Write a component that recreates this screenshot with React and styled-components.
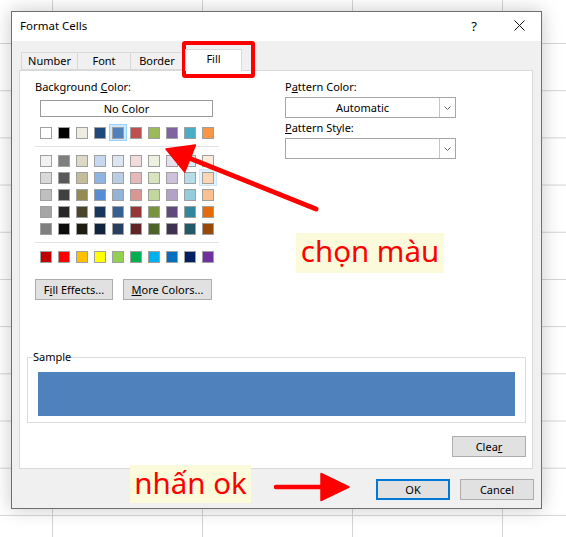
import React from "react";
import styled, { createGlobalStyle } from "styled-components";

const GlobalStyle = createGlobalStyle`
  html, body {
    margin: 0;
    padding: 0;
    height: 100%;
  }
  body {
    min-height: 537px;
    background-color: #ffffff;
    background-image:
      linear-gradient(to right, #d4d4d4 1px, transparent 1px),
      linear-gradient(to bottom, #d4d4d4 1px, transparent 1px);
    background-size: 150px 100%, 100% 47.2px;
    background-position: 52px 0, 0 43px;
    font-family: "Noto Sans", "Open Sans", sans-serif;
    font-size: 11px;
    color: #000;
  }
`;

const THEME_ROW = ["#FFFFFF", "#000000", "#EEECE1", "#1F497D", "#4F81BD", "#C0504D", "#9BBB59", "#8064A2", "#4BACC6", "#F79646"];
const TINT_ROWS = [
  ["#F2F2F2", "#7F7F7F", "#DDD9C4", "#C6D9F1", "#DCE6F2", "#F2DCDB", "#EBF1DE", "#E6E0EC", "#DBEEF4", "#FDEADA"],
  ["#D9D9D9", "#595959", "#C4BD97", "#8EB4E3", "#B9CDE5", "#E6B9B8", "#D7E4BD", "#CCC1DA", "#B7DEE8", "#FCD5B5"],
  ["#BFBFBF", "#404040", "#948A54", "#558ED5", "#95B3D7", "#D99694", "#C3D69B", "#B3A2C7", "#93CDDD", "#FAC090"],
  ["#A6A6A6", "#262626", "#4A452A", "#17375E", "#376092", "#953735", "#77933C", "#604A7B", "#31859C", "#E46C0A"],
  ["#7F7F7F", "#0D0D0D", "#1E1C11", "#10243F", "#254061", "#632523", "#4F6228", "#3F3151", "#215968", "#984807"],
];
const STANDARD_ROW = ["#C00000", "#FF0000", "#FFC000", "#FFFF00", "#92D050", "#00B050", "#00B0F0", "#0070C0", "#002060", "#7030A0"];

const TABS = [
  { label: "Number", width: 57 },
  { label: "Font", width: 54 },
  { label: "Border", width: 54 },
  { label: "Fill", width: 57, active: true },
];

const Screen = styled.div`
  position: relative;
  width: 566px;
  height: 537px;
  box-sizing: border-box;
  padding: 11px 0 0 11px;
  overflow: hidden;
`;

const Dialog = styled.div`
  width: 531px;
  height: 498px;
  box-sizing: border-box;
  border: 1px solid #6f6f6f;
  background: #f0f0f0;
  box-shadow: 0 0 18px rgba(0, 0, 0, 0.22);
  display: flex;
  flex-direction: column;
`;

const TitleBar = styled.div`
  height: 29px;
  flex: none;
  background: #fff;
  display: flex;
  align-items: center;
  padding: 0 16px 2px 8px;
  box-sizing: border-box;
`;

const Title = styled.span`
  font-size: 11.5px;
  line-height: 16px;
`;

const HelpMark = styled.span`
  margin-left: auto;
  width: 14px;
  text-align: center;
  font-size: 13px;
  line-height: 16px;
  margin-right: 33px;
`;

const CloseIcon = styled.svg`
  display: block;
  width: 11px;
  height: 11px;
`;

const Body = styled.div`
  flex: 1;
  display: flex;
  flex-direction: column;
  padding: 0 6px 7px 7px;
`;

const TabStrip = styled.div`
  height: 29px;
  box-sizing: border-box;
  display: flex;
  align-items: flex-end;
  padding-left: 2px;
`;

const Tab = styled.div`
  width: ${(p) => p.$width}px;
  height: ${(p) => (p.$active ? 22 : 18)}px;
  box-sizing: border-box;
  margin-left: ${(p) => (p.$active ? 1 : p.$first ? 0 : -1)}px;
  margin-bottom: ${(p) => (p.$active ? -1 : 0)}px;
  border: 1px solid #d9d9d9;
  border-bottom: ${(p) => (p.$active ? "none" : "1px solid #d9d9d9")};
  background: ${(p) => (p.$active ? "#fff" : "#f0f0f0")};
  position: relative;
  z-index: ${(p) => (p.$active ? 1 : 0)};
  display: flex;
  align-items: center;
  justify-content: center;
  padding-bottom: ${(p) => (p.$active ? 3 : 0)}px;
  line-height: 16px;
`;

const Panel = styled.div`
  width: 514px;
  height: 399px;
  box-sizing: border-box;
  background: #fff;
  border: 1px solid #d9d9d9;
  padding: 8px 6px 0 7px;
  display: flex;
  flex-direction: column;
`;

const TopSection = styled.div`
  display: grid;
  grid-template-columns: 250px 171px;
  padding-left: 8px;
`;

const Column = styled.div`
  display: flex;
  flex-direction: column;
  align-items: flex-start;
`;

const Label = styled.div`
  line-height: 16px;
  height: 16px;
  margin-top: ${(p) => p.$gap || 0}px;
  white-space: nowrap;
`;

const NoColorButton = styled.div`
  width: 173px;
  height: 17px;
  box-sizing: border-box;
  margin: 5px 0 0 5px;
  border: 1px solid #9b9b9b;
  background: #fff;
  display: flex;
  align-items: center;
  justify-content: center;
  line-height: 15px;
`;

const SwatchRow = styled.div`
  display: flex;
  margin-left: 2px;
  margin-top: ${(p) => p.$gap || 0}px;
`;

const SwatchCell = styled.div`
  width: 18px;
  height: 17px;
  box-sizing: border-box;
  padding-top: 2px;
  display: flex;
  justify-content: center;
  align-items: flex-start;
  border: 1px solid
    ${(p) => (p.$state === "selected" ? "#99d1ff" : p.$state === "hover" ? "#cce8ff" : "transparent")};
  background: ${(p) => (p.$state === "selected" ? "#cce8ff" : p.$state === "hover" ? "#e5f3ff" : "transparent")};
`;

const Swatch = styled.div`
  width: 12px;
  height: 12px;
  box-sizing: border-box;
  border: 1px solid #a0a0a0;
  background: ${(p) => p.$color};
`;

const Separator = styled.div`
  width: 184px;
  height: 1px;
  background: #e3e3e3;
  margin: 5px 0 5px 0;
`;

const ButtonRow = styled.div`
  display: flex;
  gap: 10px;
  margin-top: 14px;
`;

const PushButton = styled.div`
  width: ${(p) => p.$width}px;
  height: 21px;
  box-sizing: border-box;
  border: ${(p) => (p.$default ? "2px solid #0078d7" : "1px solid #adadad")};
  background: #e1e1e1;
  display: flex;
  align-items: center;
  justify-content: center;
  line-height: 16px;
  flex: none;
  align-self: ${(p) => (p.$end ? "flex-end" : "auto")};
  margin-top: ${(p) => p.$gap || 0}px;
`;

const DropDown = styled.div`
  width: 171px;
  height: 21px;
  box-sizing: border-box;
  margin-top: 2px;
  border: 1px solid #a6a6a6;
  background: #fff;
  display: flex;
`;

const DropValue = styled.div`
  flex: 1;
  display: flex;
  align-items: center;
  justify-content: center;
  line-height: 16px;
`;

const DropArrow = styled.div`
  width: 15px;
  border-left: 1px solid #c6c6c6;
  display: flex;
  align-items: center;
  justify-content: center;
`;

const SampleGroup = styled.fieldset`
  margin: 49px 0 0 0;
  padding: 0 10px 6px 10px;
  border: 1px solid #dcdcdc;
  min-width: 0;
`;

const SampleLegend = styled.legend`
  padding: 0;
  margin-left: -5px;
  line-height: 16px;
`;

const SampleFill = styled.div`
  height: 44px;
  margin-top: 7px;
  background: ${(p) => p.$color};
`;

const Footer = styled.div`
  display: flex;
  justify-content: flex-end;
  gap: 10px;
  margin-top: 10px;
  margin-right: 1px;
`;

/* red annotations drawn on top of the dialog */
const Marker = styled.div`
  position: absolute;
  left: 182px;
  top: 41px;
  width: 73px;
  height: 37px;
  box-sizing: border-box;
  border: 4px solid #ff0000;
  border-radius: 3px;
`;

const Callout = styled.div`
  position: absolute;
  left: ${(p) => p.$x}px;
  top: ${(p) => p.$y}px;
  width: ${(p) => p.$w}px;
  height: ${(p) => p.$h}px;
  background: #fbfbdc;
  color: #ff0000;
  font-size: 29.5px;
  line-height: 36px;
  display: flex;
  justify-content: center;
  white-space: nowrap;
`;

const ArrowLayer = styled.svg`
  position: absolute;
  left: 0;
  top: 0;
  width: 566px;
  height: 537px;
  pointer-events: none;
`;

function Chevron() {
  return (
    <svg width="7" height="4" viewBox="0 0 7 4">
      <polyline points="0.5,0.5 3.5,3.5 6.5,0.5" fill="none" stroke="#606060" strokeWidth="1" />
    </svg>
  );
}

function PaletteRow({ colors, gap, selected, hover }) {
  return (
    <SwatchRow $gap={gap}>
      {colors.map((c, i) => (
        <SwatchCell key={i} $state={i === selected ? "selected" : i === hover ? "hover" : undefined}>
          <Swatch $color={c} />
        </SwatchCell>
      ))}
    </SwatchRow>
  );
}

export default function App() {
  return (
    <>
      <GlobalStyle />
      <Screen>
        <Dialog>
          <TitleBar>
            <Title>Format Cells</Title>
            <HelpMark>?</HelpMark>
            <CloseIcon viewBox="0 0 11 11">
              <path d="M0.5 0.5 L10.5 10.5 M10.5 0.5 L0.5 10.5" stroke="#111" strokeWidth="1" fill="none" />
            </CloseIcon>
          </TitleBar>
          <Body>
            <TabStrip>
              {TABS.map((t, i) => (
                <Tab key={t.label} $width={t.width} $active={t.active} $first={i === 0}>
                  {t.label}
                </Tab>
              ))}
            </TabStrip>
            <Panel>
              <TopSection>
                <Column>
                  <Label>
                    Background <u>C</u>olor:
                  </Label>
                  <NoColorButton>No Color</NoColorButton>
                  <PaletteRow colors={THEME_ROW} gap={7} selected={4} />
                  <Separator />
                  {TINT_ROWS.map((row, r) => (
                    <PaletteRow key={r} colors={row} hover={r === 1 ? 9 : undefined} />
                  ))}
                  <Separator />
                  <PaletteRow colors={STANDARD_ROW} />
                  <ButtonRow>
                    <PushButton $width={78}>
                      F<u>i</u>ll Effects...
                    </PushButton>
                    <PushButton $width={89}>
                      <u>M</u>ore Colors...
                    </PushButton>
                  </ButtonRow>
                </Column>
                <Column>
                  <Label>
                    P<u>a</u>ttern Color:
                  </Label>
                  <DropDown>
                    <DropValue>Automatic</DropValue>
                    <DropArrow>
                      <Chevron />
                    </DropArrow>
                  </DropDown>
                  <Label $gap={2}>
                    <u>P</u>attern Style:
                  </Label>
                  <DropDown>
                    <DropValue />
                    <DropArrow>
                      <Chevron />
                    </DropArrow>
                  </DropDown>
                </Column>
              </TopSection>
              <SampleGroup>
                <SampleLegend>Sample</SampleLegend>
                <SampleFill $color="#4F81BD" />
              </SampleGroup>
              <PushButton $width={74} $end $gap={13}>
                Clea<u>r</u>
              </PushButton>
            </Panel>
            <Footer>
              <PushButton $width={74} $default>
                OK
              </PushButton>
              <PushButton $width={74}>Cancel</PushButton>
            </Footer>
          </Body>
        </Dialog>

        <Marker />
        <Callout $x={296} $y={233} $w={148} $h={40}>
          chọn màu
        </Callout>
        <Callout $x={130} $y={465} $w={121} $h={38}>
          nhấn ok
        </Callout>
        <ArrowLayer viewBox="0 0 566 537">
          <line x1="316" y1="209" x2="189" y2="158" stroke="#ff0000" strokeWidth="5" strokeLinecap="round" />
          <polygon points="166,149 195.5,145 184.7,172" fill="#ff0000" stroke="#ff0000" strokeWidth="1.5" strokeLinejoin="round" />
          <line x1="276" y1="487" x2="324" y2="487" stroke="#ff0000" strokeWidth="4.5" strokeLinecap="round" />
          <polygon points="349,487 321,473.5 321,500.5" fill="#ff0000" stroke="#ff0000" strokeWidth="1.5" strokeLinejoin="round" />
        </ArrowLayer>
      </Screen>
    </>
  );
}
